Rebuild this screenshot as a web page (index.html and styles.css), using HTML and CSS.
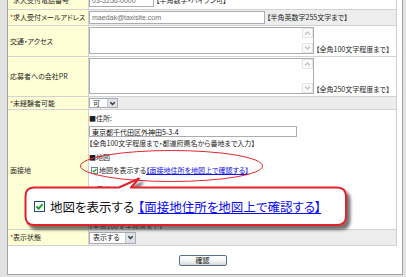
FILE: index.html
```html
<!DOCTYPE html>
<html lang="ja">
<head>
<meta charset="utf-8">
<title>求人情報入力</title>
<link rel="stylesheet" href="styles.css">
</head>
<body>
<div class="frame">
  <div class="form">
    <div class="row r0">
      <div class="label"><span class="req">*</span>求人受付電話番号</div>
      <div class="value v-mid"><input class="txt w-tel" value="03-5256-0000"><span class="note">【半角数字・ハイフン可】</span></div>
    </div>
    <div class="row r1 gray">
      <div class="label"><span class="req">*</span>求人受付メールアドレス</div>
      <div class="value v-mid"><input class="txt w-mail" value="maedak@taxisite.com"><span class="note">【半角英数字255文字まで】</span></div>
    </div>
    <div class="row r2">
      <div class="label">交通・アクセス</div>
      <div class="value v-area">
        <div class="area h-access">
          <div class="sb">
            <span class="arr"><svg viewBox="0 0 9 8"><path d="M2 5.5 L4.5 3 L7 5.5" fill="none" stroke="#c4c4c4" stroke-width="1.3"/></svg></span>
            <span class="arr"><svg viewBox="0 0 9 8"><path d="M2 2.5 L4.5 5 L7 2.5" fill="none" stroke="#c4c4c4" stroke-width="1.3"/></svg></span>
          </div>
        </div>
        <span class="note note-end">【全角100文字程度まで】</span>
      </div>
    </div>
    <div class="row r3">
      <div class="label">応募者への会社PR</div>
      <div class="value v-area">
        <div class="area h-pr">
          <div class="sb">
            <span class="arr"><svg viewBox="0 0 9 8"><path d="M2 5.5 L4.5 3 L7 5.5" fill="none" stroke="#c4c4c4" stroke-width="1.3"/></svg></span>
            <span class="arr"><svg viewBox="0 0 9 8"><path d="M2 2.5 L4.5 5 L7 2.5" fill="none" stroke="#c4c4c4" stroke-width="1.3"/></svg></span>
          </div>
        </div>
        <span class="note note-end">【全角250文字程度まで】</span>
      </div>
    </div>
    <div class="row r4 gray">
      <div class="label"><span class="req">*</span>未経験者可能</div>
      <div class="value v-mid">
        <div class="sel sel-s"><span class="sel-text">可</span><span class="sel-btn"><svg viewBox="0 0 9 9"><path d="M2.3 3.3 L4.5 5.6 L6.7 3.3" fill="none" stroke="#333" stroke-width="1.4"/></svg></span></div>
      </div>
    </div>
    <div class="row r5">
      <div class="label">面接地</div>
      <div class="value v-stack">
        <div class="sub l-addr">■住所:</div>
        <input class="txt w-addr" value="東京都千代田区外神田5-3-4">
        <div class="note l-note">【全角100文字程度まで・都道府県名から番地まで入力】</div>
        <div class="sub l-map">■地図</div>
        <div class="check-line">
          <svg class="cb-s" viewBox="0 0 7 7"><rect x=".5" y=".5" width="6" height="6" fill="#fff" stroke="#6d8197"/><path d="M1.7 3.4 L3 4.9 L5.4 2" fill="none" stroke="#2a9e2a" stroke-width="1.2"/></svg>
          <span>地図を表示する</span><a class="link" href="#">【面接地住所を地図上で確認する】</a>
        </div>
        <div class="sub l-memo">■備考:</div>
        <div class="note l-memo-note">【全角100文字程度まで】</div>
      </div>
    </div>
    <div class="row r6 gray">
      <div class="label"><span class="req">*</span>表示状態</div>
      <div class="value v-mid">
        <div class="sel sel-m"><span class="sel-text">表示する</span><span class="sel-btn"><svg viewBox="0 0 9 9"><path d="M2.3 3.3 L4.5 5.6 L6.7 3.3" fill="none" stroke="#333" stroke-width="1.4"/></svg></span></div>
      </div>
    </div>
  </div>
  <div class="actions"><button class="btn" type="button">確認</button></div>
</div>

<svg class="overlay" viewBox="0 0 406 277" width="406" height="277">
  <defs>
    <filter id="shadow" x="-10%" y="-30%" width="130%" height="180%">
      <feDropShadow dx="3.5" dy="4" stdDeviation="1.6" flood-color="#000" flood-opacity="0.55"/>
    </filter>
  </defs>
  <ellipse cx="171.5" cy="166" rx="91" ry="15.5" fill="none" stroke="#e3262f" stroke-width="1"/>
  <path d="M34 187.5 L119 187.5 L139 178.5 L131 187.5 L337 187.5 Q346 187.5 346 196.5 L346 216 Q346 225 337 225 L34 225 Q25.5 225 25.5 216 L25.5 196.5 Q25.5 187.5 34 187.5 Z" fill="#fff" stroke="#e3202b" stroke-width="2" stroke-linejoin="round" filter="url(#shadow)"/>
</svg>
<div class="callout-text">
  <svg class="cb-l" viewBox="0 0 11 11"><rect x=".5" y=".5" width="10" height="10" fill="#fff" stroke="#1e4d78"/><path d="M2.4 5.4 L4.6 7.7 L8.6 3.2" fill="none" stroke="#22a22a" stroke-width="2"/></svg>
  <span class="cl-text">地図を表示する</span><a class="cl-link" href="#">【面接地住所を地図上で確認する】</a>
</div>
</body>
</html>
```

FILE: styles.css
```css
* { box-sizing: border-box; }
html, body { margin: 0; padding: 0; }
body {
  width: 406px;
  height: 277px;
  overflow: hidden;
  position: relative;
  background: #e2e2e2;
  font-family: "Noto Sans CJK JP", "Noto Sans", sans-serif;
  font-size: 7px;
  line-height: 1;
  color: #1e1e1e;
  font-feature-settings: "palt";
}

.frame {
  margin: -9px 0 0 7px;
  width: 396px;
  background: #fff;
  border: 1px solid #a2a2a2;
  border-top: none;
  padding: 0 5px 0 0;
}
.form {
  width: 389px;
  border-right: 1px solid #d0d0d0;
}
.row {
  display: grid;
  grid-template-columns: 81px 1fr;
  border-bottom: 1px solid #d2d2d2;
}
.r0 { height: 19px; }
.r1 { height: 16px; }
.r2 { height: 31px; }
.r3 { height: 40px; }
.r4 { height: 13px; }
.r5 { height: 120px; overflow: hidden; }
.r6 { height: 16px; }

.label {
  background: #ffffd6;
  border-right: 1px solid #d2d2d2;
  display: flex;
  align-items: center;
  padding-left: 2px;
  white-space: nowrap;
}
.req { color: #e0151f; width: 3px; margin-right: 0; }
.gray .value { background: #ededed; }

.value { display: flex; white-space: nowrap; }
.v-mid { align-items: center; gap: 2px; }
.v-area { align-items: flex-start; gap: 2px; padding-top: 1px; }
.v-stack { flex-direction: column; align-items: flex-start; }

.note { color: #1e1e1e; }
.note-end { align-self: flex-end; margin-bottom: 3px; }

.txt {
  font: 7px/1 "Liberation Sans", "Noto Sans CJK JP", sans-serif;
  color: #707070;
  height: 13px;
  border: 1px solid #a9adb2;
  background: #fff;
  padding: 0 2px;
  margin: 0;
  outline: none;
}
.w-tel { width: 65px; }
.w-mail { width: 176px; }
.w-addr {
  width: 208px;
  height: 11px;
  margin-top: 4px;
  color: #111;
  font-family: "Noto Sans CJK JP", sans-serif;
  font-feature-settings: "palt";
}

.area {
  width: 225px;
  border: 1px solid #a9adb2;
  background: #fff;
  display: flex;
  justify-content: flex-end;
}
.h-access { height: 27px; }
.h-pr { height: 36px; }
.sb {
  width: 11px;
  display: flex;
  flex-direction: column;
  justify-content: space-between;
}
.arr {
  display: flex;
  width: 11px;
  height: 10px;
  border: 1px solid #e4e6ea;
  background: #fbfbfb;
}
.arr svg { width: 9px; height: 8px; }

.sel {
  display: flex;
  align-items: stretch;
  border: 1px solid #a9adb2;
  background: #fff;
}
.sel-s { width: 29px; height: 10px; }
.sel-m { width: 47px; height: 12px; }
.sel-text { display: flex; align-items: center; padding-left: 3px; flex: 1; }
.sel-btn {
  width: 10px;
  background: #dde2ea;
  border-left: 1px solid #c2c8d2;
  display: flex;
  align-items: center;
  justify-content: center;
}
.sel-btn svg { width: 9px; height: 9px; }

.sub { height: 7px; }
.l-addr { margin-top: 5px; }
.l-note { margin-top: 3px; height: 7px; }
.l-map { margin-top: 7px; }
.check-line {
  margin-top: 5px;
  height: 8px;
  display: flex;
  align-items: center;
  padding-left: 2px;
}
.cb-s { width: 7px; height: 7px; margin-right: 1px; }
.link { color: #1010e8; text-decoration: underline; }
.l-memo { margin-top: 12px; }
.l-memo-note { margin-top: 30px; color: #666; }

.actions {
  height: 28px;
  padding-top: 9px;
}
.btn {
  display: block;
  margin: 0 auto;
  width: 48px;
  height: 11px;
  padding: 0;
  border: 1px solid #5c6f88;
  border-radius: 2px;
  background: linear-gradient(#ffffff, #f3f3f1 55%, #d5d9df);
  font: 7px/1 "Noto Sans CJK JP", sans-serif;
  color: #111;
}

.overlay {
  position: absolute;
  left: 0;
  top: 0;
  pointer-events: none;
}
.callout-text {
  position: absolute;
  left: 34px;
  top: 200px;
  display: flex;
  align-items: center;
  font-size: 12.5px;
  line-height: 13px;
  white-space: nowrap;
  color: #111;
}
.cb-l { width: 11px; height: 11px; margin-right: 5px; }
.cl-text { margin-right: 4px; }
.cl-link { color: #0b0bf0; text-decoration: underline; text-underline-offset: 1px; }
```
